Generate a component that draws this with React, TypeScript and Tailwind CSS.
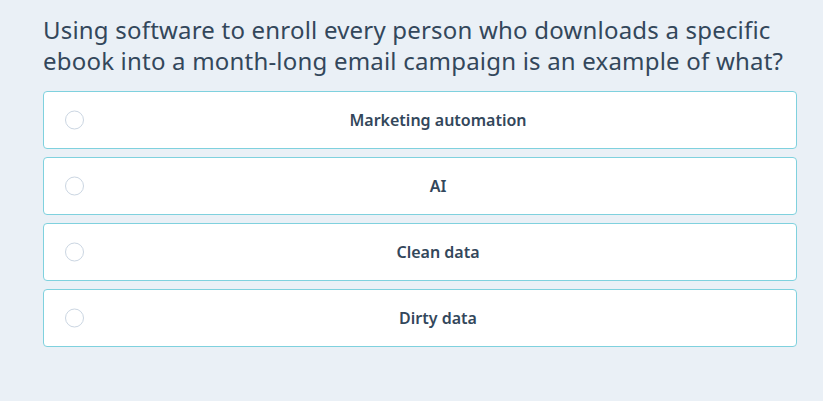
const options = ["Marketing automation", "AI", "Clean data", "Dirty data"];

export default function App() {
  return (
    <div
      className="min-h-[401px] w-full bg-[#eaf0f6] px-[43px] pt-[14px]"
      style={{ fontFamily: '"Noto Sans", "Liberation Sans", sans-serif' }}
    >
      <h1 className="whitespace-nowrap text-[24px] leading-[31px] font-normal tracking-[0.2px] text-[#33475b]">
        Using software to enroll every person who downloads a specific
        <br />
        ebook into a month-long email campaign is an example of what?
      </h1>
      <div className="mt-[15px] flex w-[754px] flex-col gap-[8px]">
        {options.map((o) => (
          <label
            key={o}
            className="relative flex h-[58px] items-center justify-center rounded-[4px] border border-[#7fd1de] bg-white pl-[36px]"
          >
            <span className="absolute left-[21px] top-1/2 h-[19px] w-[19px] -translate-y-1/2 rounded-full border border-[#cbd6e2] bg-white" />
            <span className="text-[16px] font-semibold text-[#33475b]">{o}</span>
          </label>
        ))}
      </div>
    </div>
  );
}
